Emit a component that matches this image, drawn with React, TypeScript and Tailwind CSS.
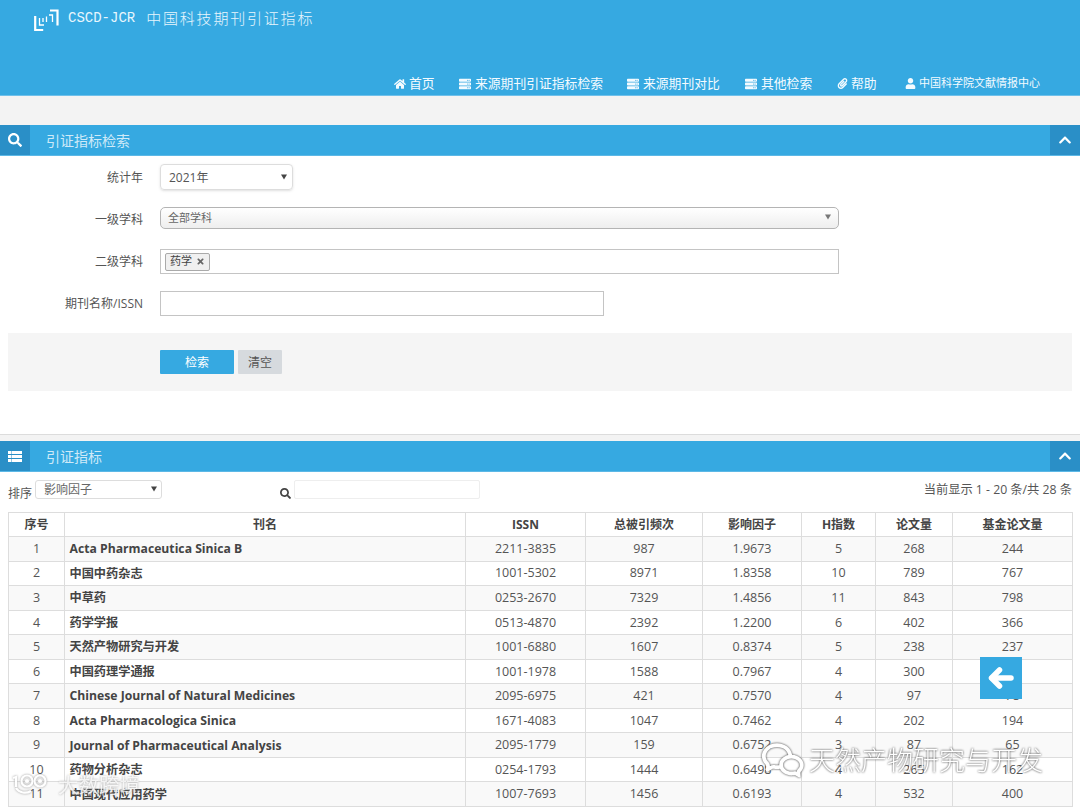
import { FaHome, FaServer, FaPaperclip, FaUser, FaSearch, FaChevronUp, FaTimes } from "react-icons/fa";
import { RiWechatLine } from "react-icons/ri";

const FONT = "font-['Open_Sans','Noto_Sans_CJK_SC',sans-serif]";

const nav = [
  { icon: <FaHome className="-mr-[1px] text-[12px]" />, label: "首页", w: "w-[65px]", cls: "text-[12.8px]" },
  { icon: <FaServer className="text-[12px]" />, label: "来源期刊引证指标检索", w: "w-[168px]", cls: "text-[12.8px]" },
  { icon: <FaServer className="text-[12px]" />, label: "来源期刊对比", w: "w-[118px]", cls: "text-[12.8px]" },
  { icon: <FaServer className="text-[12px]" />, label: "其他检索", w: "w-[92px]", cls: "text-[12.8px]" },
  { icon: <FaPaperclip className="-mr-[1px] text-[11px]" />, label: "帮助", w: "w-[68px]", cls: "text-[12.8px]" },
  { icon: <FaUser className="-mr-[1px] text-[11px]" />, label: "中国科学院文献情报中心", w: "w-[135px]", cls: "text-[11px]" },
];

const rows: [string, string, string, string, string, string, string, string][] = [
  ["1", "Acta Pharmaceutica Sinica B", "2211-3835", "987", "1.9673", "5", "268", "244"],
  ["2", "中国中药杂志", "1001-5302", "8971", "1.8358", "10", "789", "767"],
  ["3", "中草药", "0253-2670", "7329", "1.4856", "11", "843", "798"],
  ["4", "药学学报", "0513-4870", "2392", "1.2200", "6", "402", "366"],
  ["5", "天然产物研究与开发", "1001-6880", "1607", "0.8374", "5", "238", "237"],
  ["6", "中国药理学通报", "1001-1978", "1588", "0.7967", "4", "300", "281"],
  ["7", "Chinese Journal of Natural Medicines", "2095-6975", "421", "0.7570", "4", "97", "78"],
  ["8", "Acta Pharmacologica Sinica", "1671-4083", "1047", "0.7462", "4", "202", "194"],
  ["9", "Journal of Pharmaceutical Analysis", "2095-1779", "159", "0.6752", "3", "87", "65"],
  ["10", "药物分析杂志", "0254-1793", "1444", "0.6498", "4", "265", "162"],
  ["11", "中国现代应用药学", "1007-7693", "1456", "0.6193", "4", "532", "400"],
];

const heads = ["序号", "刊名", "ISSN", "总被引频次", "影响因子", "H指数", "论文量", "基金论文量"];
const widths = ["w-[56px]", "w-[401px]", "w-[120px]", "w-[117px]", "w-[99px]", "w-[74px]", "w-[77px]", "w-[120px]"];

function Caret({ color = "#444" }: { color?: string }) {
  return (
    <svg width="6" height="6" viewBox="0 0 6 6" className="mb-[2px]">
      <polygon points="0,0.5 6,0.5 3,5.5" fill={color} />
    </svg>
  );
}

function ListIcon() {
  return (
    <svg width="14" height="11" viewBox="0 0 14 11" fill="white">
      <rect x="0" y="0" width="3" height="3" />
      <rect x="3.5" y="0" width="10.5" height="3" />
      <rect x="0" y="4" width="3" height="3" />
      <rect x="3.5" y="4" width="10.5" height="3" />
      <rect x="0" y="8" width="3" height="3" />
      <rect x="3.5" y="8" width="10.5" height="3" />
    </svg>
  );
}

function SectionBar({ icon, title }: { icon: React.ReactNode; title: string }) {
  return (
    <div className="flex h-[31px] items-stretch bg-[#36a9e1] border-b border-[#5cb8e6] text-white">
      <div className="flex w-[30px] items-center justify-center bg-[#2a8fc7] text-[14px]">{icon}</div>
      <div className="flex flex-1 items-center pl-[16px] text-[14px] text-[#cfeaf8]">{title}</div>
      <div className="flex w-[30px] items-center justify-center bg-[#2a8fc7] text-[14px]">
        <FaChevronUp />
      </div>
    </div>
  );
}

function Label({ children, offset }: { children: React.ReactNode; offset: string }) {
  return <div className={`w-[143px] text-right text-[12px] text-[#555] ${offset}`}>{children}</div>;
}

export default function App() {
  return (
    <div className={`relative h-[807px] w-[1080px] overflow-hidden bg-white ${FONT}`}>
      <header className="h-[96px] border-b border-[#6fc0ea] bg-[#36a9e1] text-white">
        <div className="flex h-[36px] items-center pl-[34px]">
          <svg width="25" height="22" viewBox="0 0 25 22" fill="none" stroke="white" strokeWidth="2.2" className="mt-[4px]">
            <path d="M1.2 7v14h8" />
            <path d="M5.5 9v7h4.5" strokeWidth="1.3" />
            <path d="M9 9v4M12.5 7.5v5.5" strokeWidth="1.3" />
            <path d="M15 6h3.5v7" strokeWidth="1.3" />
            <path d="M16 1.5h7.5v15" />
          </svg>
          <span className="ml-[9px] font-['Liberation_Mono',monospace] text-[14px] text-[#e8f6fd] whitespace-pre">CSCD-JCR</span>
          <span className="ml-[11px] text-[15px] tracking-[1.8px] text-[#e8f6fd] font-light">中国科技期刊引证指标</span>
        </div>
        <nav className="mt-[38px] flex justify-end pr-[40px]">
          {nav.map((n) => (
            <div key={n.label} className={`flex items-center gap-[4px] ${n.w} ${n.cls} text-[#f4fbff]`}>
              {n.icon}
              <span>{n.label}</span>
            </div>
          ))}
        </nav>
      </header>
      <div className="h-[29px] bg-[#f3f3f3]" />

      <SectionBar icon={<FaSearch />} title="引证指标检索" />

      <section className="h-[278px] pt-[9px]">
        <div className="flex h-[24px] items-center">
          <Label offset="mt-[2px]">统计年</Label>
          <div className="ml-[17px] flex h-[26px] w-[133px] items-center justify-between rounded-[4px] border border-[#ddd] pl-[8px] pr-[5px] pt-[1px] text-[12px] text-[#555] shadow-sm">
            <span>2021年</span>
            <Caret />
          </div>
        </div>
        <div className="mt-[18px] flex h-[22px] items-center">
          <Label offset="mt-[4px]">一级学科</Label>
          <div className="ml-[17px] flex h-[22px] w-[679px] items-center justify-between rounded-[5px] border border-[#b4b4b4] bg-gradient-to-b from-white to-[#eeeeee] pl-[7px] pr-[7px] text-[11px] text-[#666]">
            <span>全部学科</span>
            <Caret color="#777" />
          </div>
        </div>
        <div className="mt-[20px] flex h-[25px] items-center">
          <Label offset="mt-[0px]">二级学科</Label>
          <div className="ml-[17px] flex h-[25px] w-[679px] items-center border border-[#c4c4c4] pl-[4px] text-[11px] text-[#444]">
            <div className="flex h-[18px] items-center gap-[4px] rounded-[2px] border border-[#aaa] bg-[#f0f0f0] px-[4px]">
              <span>药学</span>
              <FaTimes className="text-[9px] text-[#666]" />
            </div>
          </div>
        </div>
        <div className="mt-[17px] flex h-[25px] items-center">
          <Label offset="mt-[0px]">期刊名称/ISSN</Label>
          <div className="ml-[17px] h-[25px] w-[444px] border border-[#c4c4c4]" />
        </div>
        <div className="mx-[8px] mt-[17px] flex h-[58px] items-center gap-[4px] bg-[#f5f5f5] pl-[152px]">
          <div className="flex h-[24px] w-[74px] items-center justify-center rounded-[1px] bg-[#36a9e1] pt-[1px] text-[12px] text-white">检索</div>
          <div className="flex h-[24px] w-[44px] items-center justify-center rounded-[1px] bg-[#d6dade] pt-[1px] text-[12px] text-[#555]">清空</div>
        </div>
      </section>

      <div className="h-[7px] border-t border-[#dcdcdc] bg-[#f3f3f3]" />

      <SectionBar icon={<ListIcon />} title="引证指标" />

      <div className="flex h-[40px] items-start px-[8px] pt-[8px]">
        <span className="mt-[5px] text-[12px] text-[#555]">排序</span>
        <div className="ml-[3px] flex h-[19px] w-[127px] items-center justify-between rounded-[3px] border border-[#ddd] pl-[8px] pr-[4px] pt-[1px] text-[12px] text-[#666]">
          <span>影响因子</span>
          <Caret />
        </div>
        <FaSearch className="ml-[118px] mt-[8px] text-[11px] text-[#444]" />
        <div className="ml-[3px] h-[19px] w-[186px] rounded-[2px] border border-[#eee]" />
        <div className="flex-1 pt-[1px] text-right text-[12.25px] text-[#555]">当前显示 1 - 20 条/共 28 条</div>
      </div>

      <table className="ml-[8px] w-[1064px] table-fixed border-collapse text-[12.5px] text-[#555]">
        <thead>
          <tr className="h-[24px]">
            {heads.map((h, i) => (
              <th key={h} className={`${widths[i]} border border-[#dddddd] p-0 text-center text-[12px] font-bold text-[#444]`}>{h}</th>
            ))}
          </tr>
        </thead>
        <tbody>
          {rows.map((r, ri) => (
            <tr key={r[0]} className={`h-[24.55px] ${ri % 2 === 0 ? "bg-[#f9f9f9]" : "bg-white"}`}>
              {r.map((c, i) => (
                <td
                  key={i}
                  className={`border border-[#dddddd] p-0 pt-[1px] ${i === 1 ? "pl-[4.5px] text-left text-[12.2px] font-bold text-[#444]" : "text-center"}`}
                >
                  {c}
                </td>
              ))}
            </tr>
          ))}
        </tbody>
      </table>

      <div className="absolute left-[980px] top-[657px] flex h-[42px] w-[42px] items-center justify-center bg-[#36a9e1]">
        <svg width="26" height="22" viewBox="0 0 26 22" fill="none" stroke="white" strokeWidth="5.5" strokeLinecap="round" strokeLinejoin="round">
          <path d="M23 11H4" />
          <path d="M11.5 3 3.5 11l8 8" />
        </svg>
      </div>

      <div className="absolute left-[760px] top-[737px] flex items-center text-white [filter:drop-shadow(0_0_1px_#333)]">
        <RiWechatLine className="text-[46px]" />
        <span className="ml-[3px] text-[26px] leading-[46px] font-light">天然产物研究与开发</span>
      </div>
      <div className="absolute left-[9px] top-[773px] flex items-center text-white/80 [filter:drop-shadow(0_0_1px_#999)]">
        <svg width="42" height="22" viewBox="0 0 42 22" fill="none" stroke="white" strokeWidth="2.2">
          <path d="M4 4l3-1v10" />
          <path d="M7 14c3 5 10 6 15 3" />
          <circle cx="18" cy="7" r="5.5" />
          <circle cx="31" cy="7" r="5.5" />
          <circle cx="18" cy="7" r="1" fill="white" />
          <circle cx="31" cy="7" r="1" fill="white" />
        </svg>
        <span className="ml-[7px] text-[20.5px] leading-[24px]">大数跨境</span>
      </div>
    </div>
  );
}
